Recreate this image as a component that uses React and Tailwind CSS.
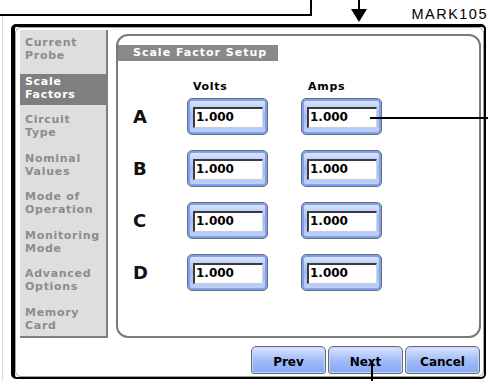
import React from 'react';

const menu = [
  ['Current', 'Probe'],
  ['Scale', 'Factors'],
  ['Circuit', 'Type'],
  ['Nominal', 'Values'],
  ['Mode of', 'Operation'],
  ['Monitoring', 'Mode'],
  ['Advanced', 'Options'],
  ['Memory', 'Card'],
];

const rows = ['A', 'B', 'C', 'D'];

function Field({ value }) {
  return (
    <div className="w-[81px] h-[37px] rounded-[5px] border border-[#6a6d74] bg-linear-to-b from-[#dfe8fe] via-[#9fbaf8] to-[#c3d4fb] shadow-[inset_0_0_0_2px_#7f9ff3] pl-[5px] pr-[4px] pt-[8px] pb-[6px]">
      <div className="h-full bg-white border-t-2 border-l-2 border-r border-b border-t-[#3a3a3a] border-l-[#3a3a3a] border-r-[#d6d6d6] border-b-[#cdcdcd] pl-[1px] text-[12px] leading-[17px] font-bold text-black">
        {value}
      </div>
    </div>
  );
}

function Button({ label }) {
  return (
    <button className="w-[75px] h-[28px] rounded-t-[5px] rounded-b-[3px] border border-[#6a6d74] bg-linear-to-b from-[#dce6fe] via-[#a3bdf8] to-[#86a7f5] shadow-[inset_0_0_0_1px_#c4d5fc] text-[12px] font-bold text-black pt-[3px]">
      {label}
    </button>
  );
}

export default function App() {
  return (
    <div className="relative w-[488px] h-[381px] overflow-hidden bg-white font-['DejaVu_Sans',sans-serif]">
      {/* annotation header */}
      <div className="flex h-[24px]">
        <div className="w-[318px] h-[16px] border-b-2 border-r-2 border-black" />
        <svg width="60" height="24" className="ml-[36px]">
          <line x1="11" y1="0" x2="11" y2="10" stroke="black" strokeWidth="2" />
          <polygon points="3,9 19,9 11,22" fill="black" />
        </svg>
        <span className="ml-[4px] mt-[7px] text-[14.5px] leading-[14px] tracking-[1.5px] font-['Liberation_Sans',sans-serif] text-black whitespace-nowrap">
          MARK105
        </span>
      </div>

      {/* device */}
      <div className="ml-[11px] w-[475px] h-[355px] border-black border-t-[3px] border-l-4 border-r-2 border-b-2 rounded-[5px]">
        <div className="h-full rounded-[6px] border border-[#a0a0a0] flex flex-col">
          <div className="flex items-start">
            {/* sidebar */}
            <div className="ml-[4px] mt-[2px] w-[88px] h-[308px] bg-[#dedede] border-r-2 border-b-2 border-[#808080] pt-[5px] flex flex-col gap-[7.5px]">
              {menu.map(([a, b], i) => (
                <div
                  key={a}
                  className={`h-[31px] pt-[1px] pl-[5px] text-[11px] leading-[13px] font-bold tracking-[0.7px] whitespace-nowrap ${
                    i === 1 ? 'bg-[#7f7f7f] text-white' : 'text-[#8c8c8c]'
                  }`}
                >
                  <div>{a}</div>
                  <div>{b}</div>
                </div>
              ))}
            </div>

            {/* panel */}
            <div className="ml-[8px] mt-[6px] w-[365px] h-[304px] rounded-[12px] border-2 border-[#7a7a7a] pt-[9px]">
              <div className="w-[160px] h-[16px] bg-[#898989] text-white text-[11px] leading-[16px] font-bold tracking-[1px] pl-[15px] whitespace-nowrap">
                Scale Factor Setup
              </div>
              <div className="ml-[15px] mt-[19px] flex">
                <div className="w-[54px]" />
                <div className="w-[81px] pl-[6px] text-[11px] leading-[13px] font-bold tracking-[0.7px]">Volts</div>
                <div className="ml-[33px] w-[81px] pl-[7px] text-[11px] leading-[13px] font-bold tracking-[0.7px]">Amps</div>
              </div>
              <div className="ml-[15px] mt-[5px] flex flex-col gap-[15px]">
                {rows.map((r) => (
                  <div key={r} className="flex items-center">
                    <div className="w-[54px] text-[18px] font-semibold text-[#111]">{r}</div>
                    <Field value="1.000" />
                    <div className="ml-[33px]">
                      <Field value="1.000" />
                    </div>
                  </div>
                ))}
              </div>
            </div>
          </div>

          {/* buttons */}
          <div className="mt-[8px] flex justify-end gap-[2px] pr-[3px]">
            <Button label="Prev" />
            <Button label="Next" />
            <Button label="Cancel" />
          </div>
        </div>
      </div>

      {/* callout lines */}
      <div className="absolute left-[2px] top-[16px] w-px h-[365px] bg-[#dcdcdc]" />
      <div className="absolute left-[370px] top-[117px] w-[118px] h-[2px] bg-black" />
      <div className="absolute left-[371px] top-[362px] w-[2px] h-[19px] bg-black" />
    </div>
  );
}
